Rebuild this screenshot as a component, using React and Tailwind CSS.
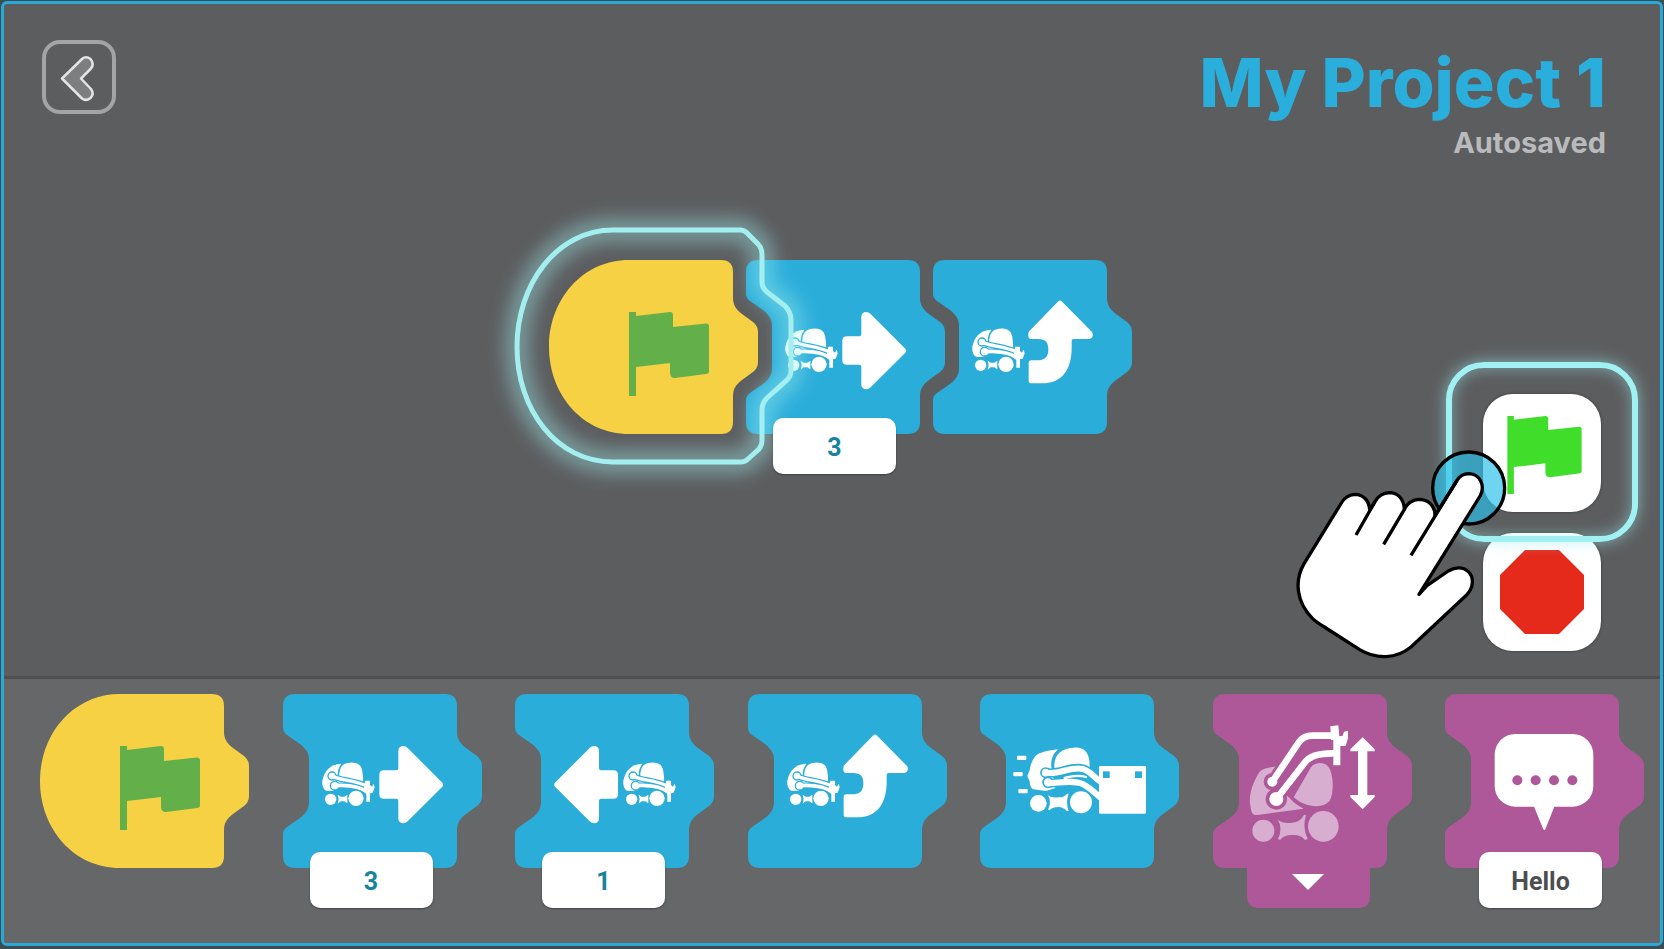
import React from "react";

const BLUE = "#2badda";
const PURPLE = "#ae5799";

const BLOCK_PATH =
  "M36 0H486Q522 0 522 36V114C522 138 534 150 549 162L582 186Q597 198 597 216V306Q597 324 582 336L549 360C534 372 522 384 522 408V486Q522 522 486 522H36Q0 522 0 486V420Q0 408 12 399L51 372C69 357 78 345 78 324V198C78 177 69 165 51 150L12 123Q0 114 0 102V36Q0 0 36 0Z";

const START_PATH =
  "M80 0H172Q184 0 184 12V38C184 46 188 50 193 54L204 62Q209 66 209 72V102Q209 108 204 112L193 120C188 124 184 128 184 136V162Q184 174 172 174H80C34 174 0 135 0 87S34 0 80 0Z";

function Flag({ className }) {
  return (
    <svg viewBox="0 0 80 84" className={className} fill="currentColor" aria-hidden="true">
      <path d="M0 0H7V4L41 0Q44 0 44 3V15L77 11.500Q80 11.500 80 14V59Q80 62 77 62L46 66Q41 66 41 61V51L7 55V84H0Z" />
    </svg>
  );
}

/* Small vehicle used by the three movement blocks. */
function Truck({ x = 0 }) {
  return (
    <g transform={`translate(${x - 66} -72)`} fill="#fff">
      <path d="M240 281C208 282 190 302 184 332C182 350 190 362 200 363L216 362L240 352L250 330Z" />
      <path d="M233 328C229 290 244 275 272 275C300 275 309 288 309 338L290 340Z" stroke={BLUE} strokeWidth="5" />
      <g fill="none">
        <path d="M221 347C255 344 292 346 318 372" stroke={BLUE} strokeWidth="17" />
        <path d="M213 318C240 333 275 328 322 350" stroke={BLUE} strokeWidth="18" />
        <circle cx="213" cy="318" r="12" fill="#fff" stroke={BLUE} strokeWidth="4" />
        <circle cx="221" cy="347" r="13" fill="#fff" stroke={BLUE} strokeWidth="4" />
        <path d="M221 347C255 344 292 348 320 366" stroke="#fff" strokeWidth="11" />
        <path d="M213 318C240 333 275 328 322 350" stroke="#fff" strokeWidth="10" />
      </g>
      <path d="M313 332H327V345L333 350L338 341L341 352L335 368L327 370V395H316V372L306 364Z" />
      <circle cx="209" cy="388" r="17" />
      <circle cx="285" cy="385" r="27" fill={BLUE} />
      <circle cx="285" cy="385" r="23" />
      <path d="M230 374L239 380H250L259 374V400L250 394H239L230 401L233 388Z" />
    </g>
  );
}

function StraightArrow({ flip }) {
  return (
    <path
      transform={flip ? "translate(664 -72) scale(-1 1)" : "translate(-66 -72)"}
      fill="#fff"
      d="M368 301H406Q412 301 412 295V242Q413 228 427 228Q434 228 440 234L544 338Q549 344 544 350L440 454Q434 460 427 460Q413 459 412 446V392Q412 386 406 386H368Q356 386 355 374V313Q356 301 368 301Z"
    />
  );
}

function TurnArrow() {
  return (
    <path
      transform="translate(-52 -72)"
      fill="#fff"
      d="M428 196Q433 191 438 196L529 288Q533 293 531 301Q529 309 521 309H474Q468 309 468 315V335C468 400 440 442 378 442H347Q339 442 339 434V381Q339 373 347 373H362C388 373 398 362 398 341C398 319 390 309 368 309H346Q338 308 338 300V293Q338 288 342 284Z"
    />
  );
}

function PushIcon() {
  return (
    <g transform="translate(-64 -72)" fill="#fff">
      <rect x="175" y="257" width="28" height="13" rx="3" />
      <rect x="164" y="306" width="28" height="13" rx="3" />
      <rect x="179" y="357" width="28" height="13" rx="3" />
      <path d="M298 238C270 241 243 247 231 257C220 270 215 286 213 300L206 318L213 334C213 346 217 355 224 358L262 363L290 354L278 290C276 268 284 250 298 238Z" />
      <path d="M288 300C282 262 300 236 345 233C382 231 394 252 393 296L350 304Z" />
      <g fill="none" strokeLinecap="round">
        <path d="M268 340C310 338 345 330 372 342C392 352 402 362 424 382" stroke={BLUE} strokeWidth="26" />
        <path d="M261 308C300 316 335 288 372 297C395 303 402 318 424 334" stroke={BLUE} strokeWidth="28" />
        <circle cx="261" cy="308" r="14" fill="#fff" stroke={BLUE} strokeWidth="5" />
        <circle cx="268" cy="337" r="15" fill="#fff" stroke={BLUE} strokeWidth="5" />
        <path d="M268 340C310 338 345 330 372 342C392 352 402 362 424 382" stroke="#fff" strokeWidth="18" />
        <path d="M261 308C300 316 335 288 372 297C395 303 402 318 424 334" stroke="#fff" strokeWidth="18" />
        <path d="M318 324C340 318 362 315 382 321" stroke="#fff" strokeWidth="7" />
      </g>
      <rect x="421" y="288" width="141" height="143" rx="4" />
      <rect x="433" y="304" width="20" height="20" fill={BLUE} />
      <rect x="529" y="304" width="21" height="20" fill={BLUE} />
      <circle cx="239" cy="400" r="25" />
      <circle cx="367" cy="397" r="38" fill={BLUE} />
      <circle cx="367" cy="397" r="33" />
      <path d="M268 376Q280 385 300 382Q318 382 325 371H330Q320 397 330 423H324Q315 412 299 411Q281 411 273 421L268 418Q280 398 268 376Z" />
    </g>
  );
}

function LiftIcon() {
  return (
    <g transform="translate(-42 -72)">
      <g fill="#d8aed0">
        <path d="M238 289C208 291 186 298 180 308C160 340 150 375 153 400C156 422 158 434 168 435L182 434L314 416C296 407 282 397 272 384L215 340Z" />
        <path d="M284 382L336 292C350 275 376 276 388 290C404 312 406 370 391 394C372 416 320 414 284 382Z" />
        <circle cx="193" cy="482" r="33" />
        <circle cx="373" cy="469" r="46" />
        <path d="M237 449Q252 462 280 458Q305 456 315 434L321 436Q309 472 326 507L318 510Q306 494 280 495Q256 494 243 510L237 507Q252 478 237 449Z" />
      </g>
      <g fill="none" strokeLinecap="round">
        <path d="M220 335L298 219Q312 197 340 197H400" stroke={PURPLE} strokeWidth="36" />
        <path d="M232 387L318 277Q338 250 400 250" stroke={PURPLE} strokeWidth="36" />
        <circle cx="220" cy="335" r="26" fill={PURPLE} />
        <circle cx="232" cy="387" r="32" fill={PURPLE} />
        <path d="M220 335L298 219Q312 197 340 197H400" stroke="#fff" strokeWidth="20" />
        <path d="M232 387L318 277Q338 250 400 250" stroke="#fff" strokeWidth="20" />
      </g>
      <g fill="#fff">
        <circle cx="220" cy="335" r="15" />
        <circle cx="232" cy="387" r="21" />
        <path d="M394 169L418 166L421 199L431 197L435 185L447 182V205L440 228H424V286H403V210H396Z" />
        <path d="M491 202L527 238V244H505V375H527V381L491 418L454 381V375H477V244H454V238Z" />
      </g>
    </g>
  );
}

function SpeechIcon() {
  return (
    <g transform="translate(-49 -72)">
      <rect x="198" y="192" width="296" height="218" rx="62" fill="#fff" />
      <path d="M314 405H379L350 478Q347 483 344 478Z" fill="#fff" />
      <g fill={PURPLE}>
        <circle cx="266" cy="331" r="15" />
        <circle cx="321" cy="331" r="15" />
        <circle cx="376" cy="331" r="15" />
        <circle cx="431" cy="331" r="15" />
      </g>
    </g>
  );
}

function StartBlock({ active }) {
  return (
    <button type="button" aria-label="Start on flag" className="relative z-10 h-[174px] w-[209px] shrink-0">
      <svg viewBox="0 0 209 174" className="h-full w-full" aria-hidden="true">
        <path d={START_PATH} fill="#f5d143" />
      </svg>
      <Flag className="absolute top-[52px] left-20 h-[84px] w-20 text-[#63b04b]" />
      {active && <StartGlow />}
    </button>
  );
}

function StartGlow() {
  const d =
    "M64 -30H191Q195 -30 198 -27L209 -16Q213 -12 213 -5V22Q213 28 218 32L236 46Q242 52 242 60V110Q242 117 237 121L218 138Q213 143 213 150V181Q213 185 210 189L199 199Q196 202 192 202H64C8 202 -32 150 -32 87S8 -30 64 -30Z";
  return (
    <svg viewBox="-70 -70 350 310" className="pointer-events-none absolute -top-[70px] -left-[70px] h-[310px] w-[350px] max-w-none" aria-hidden="true">
      <defs>
        <filter id="soft" x="-20%" y="-20%" width="140%" height="140%">
          <feGaussianBlur stdDeviation="9" />
        </filter>
      </defs>
      <path d={d} fill="none" stroke="#a0f0f0" strokeWidth="24" opacity="0.42" filter="url(#soft)" />
      <path d={d} fill="none" stroke="#a3eff0" strokeWidth="5" />
    </svg>
  );
}

function Block({ label, color, children, footer }) {
  return (
    <div className="flex w-[199px] shrink-0 flex-col items-start">
      <button type="button" aria-label={label} className="h-[174px] w-[199px]">
        <svg viewBox="0 0 597 522" className="h-full w-full" aria-hidden="true">
          <path d={BLOCK_PATH} fill={color} />
          {children}
        </svg>
      </button>
      {footer}
    </div>
  );
}

function ValueBox({ label, value, className }) {
  return (
    <input
      type="text"
      aria-label={label}
      defaultValue={value}
      className={`relative z-20 -mt-4 h-14 w-[123px] rounded-[10px] bg-white pt-0.5 text-center font-['Roboto',sans-serif] text-[25px] font-bold shadow-[0_1px_2px_rgba(0,0,0,0.35)] ${className}`}
    />
  );
}

function ForwardBlock() {
  return (
    <Block
      label="Move forward"
      color={BLUE}
      footer={<ValueBox label="Forward steps" value="3" className="ml-[27px] text-[#17849c]" />}
    >
      <Truck />
      <StraightArrow />
    </Block>
  );
}

function TurnBlock() {
  return (
    <Block label="Turn left" color={BLUE}>
      <Truck />
      <TurnArrow />
    </Block>
  );
}

function Pointer() {
  return (
    <svg
      viewBox="40 320 660 651"
      className="pointer-events-none absolute top-[53px] -left-[190px] h-[217px] w-[220px] max-w-none"
      aria-hidden="true"
      stroke="#000"
      strokeWidth="10"
      strokeLinecap="round"
      strokeLinejoin="round"
    >
      <circle cx="567" cy="443" r="108" fill="#2bbfe8" fillOpacity="0.68" />
      <path
        fill="#fff"
        d="M418 762L602 466C617 436 602 402 568 400C550 400 539 408 531 422L466 526C466 494 444 477 418 477C396 478 384 488 374 506C372 474 354 457 329 457C308 458 296 466 286 484L270 508C268 480 250 462 226 462C206 463 194 472 185 488L72 672C44 722 50 786 98 834C110 846 122 852 134 860L240 928C290 958 350 956 394 920L560 765C582 742 584 712 566 694C550 678 526 680 506 692L442 736Z"
      />
      <path fill="none" strokeLinecap="butt" d="M532 420L394 645M376 504L312 612M286 484L229 584" />
    </svg>
  );
}

export default function App() {
  return (
    <div className="flex min-h-screen flex-col bg-[#3d4b54] p-px pb-[3px] font-['Inter',sans-serif]">
      <div className="flex flex-1 flex-col overflow-hidden rounded-md border-[3px] border-[#29a9d3] bg-[#5c5d5f]">
        <main className="flex flex-1 flex-col">
          <header className="flex h-64 items-start justify-between pt-9 pr-[54px] pl-[38px]">
            <button
              type="button"
              aria-label="Back"
              className="h-[74px] w-[74px] rounded-[18px] border-4 border-[#a3a4a6]"
            >
              <svg viewBox="4 4 66 66" className="h-full w-full" aria-hidden="true">
                <path
                  d="M20 38.500L40 19Q44 15.500 48.500 19Q52.500 24 49 28.500L39 38.500L49 49Q52.500 54 48.500 58Q44 61.500 40 58.500Z"
                  fill="#7d7e80"
                  stroke="#e4e4e5"
                  strokeWidth="2.500"
                  strokeLinejoin="round"
                />
              </svg>
            </button>
            <div className="flex flex-col items-end">
              <h1 className="text-[68px] leading-[84px] font-extrabold text-[#2aaedb]">My Project 1</h1>
              <p className="text-[29px] leading-[38px] font-bold text-[#b9babc]">Autosaved</p>
            </div>
          </header>

          <div className="grid flex-1 grid-cols-[1fr_auto_1fr] items-start pr-[59px] pl-[76px]">
            <div className="col-start-2 flex items-start -space-x-3">
              <StartBlock active />
              <ForwardBlock />
              <TurnBlock />
            </div>
            <div className="flex flex-col items-end gap-[21px] pt-[134px]">
              <div className="relative z-10">
                <button
                  type="button"
                  aria-label="Run program"
                  className="flex h-[118px] w-[118px] items-center justify-center rounded-[30px] bg-white pt-1 pl-1 shadow-[0_0_3px_rgba(0,0,0,0.4)]"
                >
                  <Flag className="h-[78px] w-[75px] text-[#40dd2b]" />
                </button>
                <span className="pointer-events-none absolute -inset-x-[37px] -top-8 -bottom-[30px] rounded-[38px] border-[6px] border-[#a0f1f4] shadow-[0_0_16px_rgba(160,240,240,0.6),inset_0_0_16px_rgba(160,240,240,0.5)]" />
                <Pointer />
              </div>
              <button
                type="button"
                aria-label="Stop program"
                className="flex h-[118px] w-[118px] items-center justify-center rounded-[30px] bg-white shadow-[0_0_3px_rgba(0,0,0,0.4)]"
              >
                <svg viewBox="0 0 84 84" className="h-[84px] w-[84px]" aria-hidden="true">
                  <path d="M25 0H59L84 25V59L59 84H25L0 59V25Z" fill="#e5291b" />
                </svg>
              </button>
            </div>
          </div>
        </main>

        <section
          aria-label="Block palette"
          className="flex items-start justify-between border-t-[3px] border-[#4f5052] bg-[#666769] pt-[15px] pr-[16px] pb-[35px] pl-[36px]"
        >
          <StartBlock />
          <ForwardBlock />
          <Block
            label="Move backward"
            color={BLUE}
            footer={<ValueBox label="Backward steps" value="1" className="ml-[27px] text-[#17849c]" />}
          >
            <Truck x={207} />
            <StraightArrow flip />
          </Block>
          <TurnBlock />
          <Block label="Push" color={BLUE}>
            <PushIcon />
          </Block>
          <Block
            label="Move arm"
            color={PURPLE}
            footer={
              <button
                type="button"
                aria-label="Choose arm direction"
                className="-mt-4 ml-[34px] flex h-14 w-[123px] items-center justify-center rounded-[10px] bg-[#ae5799] pt-1"
              >
                <svg viewBox="0 0 32 16" className="h-4 w-8" aria-hidden="true">
                  <path d="M0 0H32L16 16Z" fill="#fff" />
                </svg>
              </button>
            }
          >
            <LiftIcon />
          </Block>
          <Block
            label="Say"
            color={PURPLE}
            footer={<ValueBox label="Message" value="Hello" className="ml-[34px] text-[#4d4e50]" />}
          >
            <SpeechIcon />
          </Block>
        </section>
      </div>
    </div>
  );
}
